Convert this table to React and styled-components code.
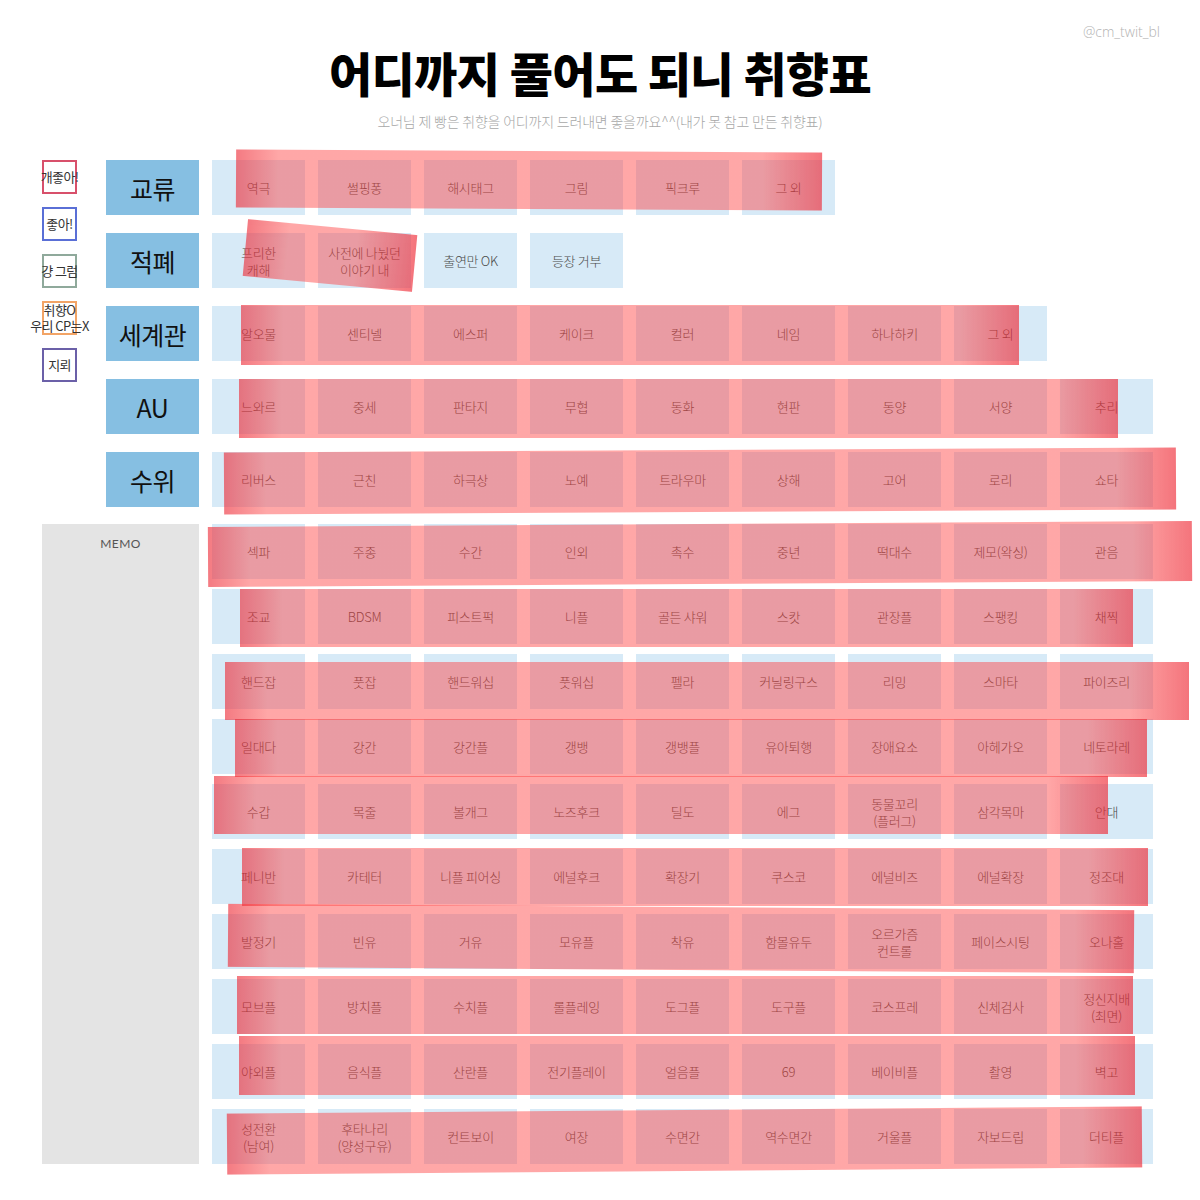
import { createGlobalStyle, styled } from "styled-components";

const GlobalStyle = createGlobalStyle`
  * {
    box-sizing: border-box;
  }
  body {
    margin: 0;
    background: #fff;
    font-family: "Noto Sans CJK KR", "Noto Sans", sans-serif;
  }
`;

const Page = styled.div`
  width: 1200px;
  height: 1200px;
  padding-top: 22px;
  overflow: hidden;
  background: #fff;
`;

const Header = styled.header`
  display: flex;
  flex-direction: column;
  align-items: center;
`;

const Handle = styled.div`
  align-self: flex-end;
  margin-right: 40px;
  height: 20px;
  line-height: 20px;
  font-family: "Open Sans", "Noto Sans", sans-serif;
  font-size: 14px;
  font-weight: 300;
  color: #b3b3b3;
`;

const Title = styled.h1`
  margin: 0;
  height: 60px;
  line-height: 60px;
  font-size: 47px;
  font-weight: 900;
  letter-spacing: -0.6px;
  color: #000;
`;

const Subtitle = styled.p`
  margin: 9px 0 0;
  height: 20px;
  line-height: 20px;
  font-size: 14px;
  font-weight: 300;
  letter-spacing: -0.2px;
  color: #a8a8a8;
`;

const Board = styled.div`
  margin: 29px 0 0 42px;
  display: flex;
  flex-direction: column;
  gap: 17px;
`;

const TopSection = styled.div`
  display: flex;
`;

const Legend = styled.ul`
  list-style: none;
  margin: 0;
  padding: 0;
  width: 64px;
  display: flex;
  flex-direction: column;
  gap: 13px;
`;

const LegendItem = styled.li`
  width: 35px;
  height: 34px;
  border: 2px solid ${(p) => p.$color};
  display: flex;
  align-items: center;
  justify-content: center;
  white-space: pre;
  text-align: center;
  font-size: 13px;
  line-height: 16px;
  letter-spacing: -0.6px;
  color: #333;
`;

const RowStack = styled.div`
  display: flex;
  flex-direction: column;
  gap: ${(p) => p.$gap}px;
`;

const Row = styled.div`
  display: flex;
  gap: 13px;
`;

const Label = styled.div`
  width: 93px;
  height: 55px;
  flex-shrink: 0;
  background: #86bfe2;
  display: flex;
  align-items: center;
  justify-content: center;
  font-size: 25px;
  font-weight: 400;
  letter-spacing: -0.5px;
  color: #111;
`;

const Cells = styled.div`
  position: relative;
  display: flex;
  gap: 13px;
`;

const Cell = styled.div`
  width: 93px;
  height: 55px;
  flex-shrink: 0;
  background: #d7eaf7;
  display: flex;
  align-items: center;
  justify-content: center;
  text-align: center;
  white-space: pre-line;
  font-size: 13px;
  line-height: 17px;
  font-weight: 300;
  letter-spacing: -0.3px;
  color: #4a4a4a;
`;

const Stroke = styled.span`
  position: absolute;
  z-index: 1;
  left: ${(p) => p.$left}px;
  top: ${(p) => p.$top}px;
  width: ${(p) => p.$width}px;
  height: ${(p) => p.$height}px;
  transform: rotate(${(p) => p.$rotate || 0}deg);
  background: linear-gradient(
    90deg,
    rgba(236, 40, 52, 0.62) 0px,
    rgba(255, 60, 60, 0.45) 42px,
    rgba(255, 60, 60, 0.45) calc(100% - 60px),
    rgba(238, 38, 50, 0.64) 100%
  );
  filter: blur(0.5px);
  pointer-events: none;
`;

const BottomSection = styled.div`
  display: flex;
  gap: 13px;
`;

const Memo = styled.div`
  width: 157px;
  flex-shrink: 0;
  background: #e4e4e4;
  padding-top: 12px;
  text-align: center;
  font-family: Lato, "Open Sans", sans-serif;
  font-size: 12px;
  letter-spacing: 0.4px;
  color: #555;
`;

const legend = [
  { text: "개좋아!", color: "#d8506b" },
  { text: "좋아!", color: "#5a6fd6" },
  { text: "걍 그럼", color: "#8fa99b" },
  { text: "취향O\n우리 CP는X", color: "#f2a466" },
  { text: "지뢰", color: "#6b60a8" },
];

const topRows = [
  {
    label: "교류",
    items: ["역극", "썰핑퐁", "해시태그", "그림", "픽크루", "그 외"],
    stroke: { left: 24, top: -9, width: 586, height: 58, rotate: 0.3 },
  },
  {
    label: "적폐",
    items: ["프리한\n캐해", "사전에 나눴던\n이야기 내", "출연만 OK", "등장 거부"],
    stroke: { left: 33, top: -6, width: 170, height: 57, rotate: 5.4 },
  },
  {
    label: "세계관",
    items: ["알오물", "센티넬", "에스퍼", "케이크", "컬러", "네임", "하나하키", "그 외"],
    stroke: { left: 29, top: -1, width: 778, height: 60 },
  },
  {
    label: "AU",
    items: ["느와르", "중세", "판타지", "무협", "동화", "현판", "동양", "서양", "추리"],
    stroke: { left: 27, top: 0, width: 879, height: 59 },
  },
  {
    label: "수위",
    items: ["리버스", "근친", "하극상", "노예", "트라우마", "상해", "고어", "로리", "쇼타"],
    stroke: { left: 12, top: -2, width: 952, height: 62, rotate: -0.3 },
  },
];

const bottomRows = [
  {
    items: ["섹파", "주종", "수간", "인외", "촉수", "중년", "떡대수", "제모(왁싱)", "관음"],
    stroke: { left: -4, top: 0, width: 984, height: 60, rotate: -0.35 },
  },
  {
    items: ["조교", "BDSM", "피스트퍽", "니플", "골든 샤워", "스캇", "관장플", "스팽킹", "채찍"],
    stroke: { left: 28, top: 0, width: 893, height: 58 },
  },
  {
    items: ["핸드잡", "풋잡", "핸드워십", "풋워십", "펠라", "커닐링구스", "리밍", "스마타", "파이즈리"],
    stroke: { left: 13, top: 8, width: 964, height: 58 },
  },
  {
    items: ["일대다", "강간", "강간플", "갱뱅", "갱뱅플", "유아퇴행", "장애요소", "아헤가오", "네토라레"],
    stroke: { left: 23, top: 0, width: 912, height: 58 },
  },
  {
    items: ["수갑", "목줄", "볼개그", "노즈후크", "딜도", "에그", "동물꼬리\n(플러그)", "삼각목마", "안대"],
    stroke: { left: 2, top: -8, width: 894, height: 58 },
  },
  {
    items: ["페니반", "카테터", "니플 피어싱", "에널후크", "확장기", "쿠스코", "에널비즈", "에널확장", "정조대"],
    stroke: { left: 30, top: -1, width: 906, height: 58 },
  },
  {
    items: ["발정기", "빈유", "거유", "모유플", "착유", "함몰유두", "오르가즘\n컨트롤", "페이스시팅", "오나홀"],
    stroke: { left: 16, top: -7, width: 906, height: 63, rotate: 0.4 },
  },
  {
    items: ["모브플", "방치플", "수치플", "롤플레잉", "도그플", "도구플", "코스프레", "신체검사", "정신지배\n(최면)"],
    stroke: { left: 25, top: -3, width: 896, height: 58 },
  },
  {
    items: ["야외플", "음식플", "산란플", "전기플레이", "얼음플", "69", "베이비플", "촬영", "벽고"],
    stroke: { left: 27, top: -8, width: 896, height: 59 },
  },
  {
    items: ["성전환\n(남여)", "후타나리\n(양성구유)", "컨트보이", "여장", "수면간", "역수면간", "거울플", "자보드립", "더티플"],
    stroke: { left: 15, top: 1, width: 915, height: 61, rotate: -0.45 },
  },
];

const CellGroup = ({ items, stroke }) => (
  <Cells>
    {items.map((item) => (
      <Cell key={item}>{item}</Cell>
    ))}
    {stroke && (
      <Stroke
        $left={stroke.left}
        $top={stroke.top}
        $width={stroke.width}
        $height={stroke.height}
        $rotate={stroke.rotate}
      />
    )}
  </Cells>
);

export default function App() {
  return (
    <Page>
      <GlobalStyle />
      <Header>
        <Handle>@cm_twit_bl</Handle>
        <Title>어디까지 풀어도 되니 취향표</Title>
        <Subtitle>
          오너님 제 빵은 취향을 어디까지 드러내면 좋을까요^^(내가 못 참고 만든 취향표)
        </Subtitle>
      </Header>

      <Board>
        <TopSection>
          <Legend>
            {legend.map((l) => (
              <LegendItem key={l.text} $color={l.color}>
                {l.text}
              </LegendItem>
            ))}
          </Legend>
          <RowStack $gap={18}>
            {topRows.map((row) => (
              <Row key={row.label}>
                <Label>{row.label}</Label>
                <CellGroup items={row.items} stroke={row.stroke} />
              </Row>
            ))}
          </RowStack>
        </TopSection>

        <BottomSection>
          <Memo>MEMO</Memo>
          <RowStack $gap={10}>
            {bottomRows.map((row, i) => (
              <CellGroup key={i} items={row.items} stroke={row.stroke} />
            ))}
          </RowStack>
        </BottomSection>
      </Board>
    </Page>
  );
}
